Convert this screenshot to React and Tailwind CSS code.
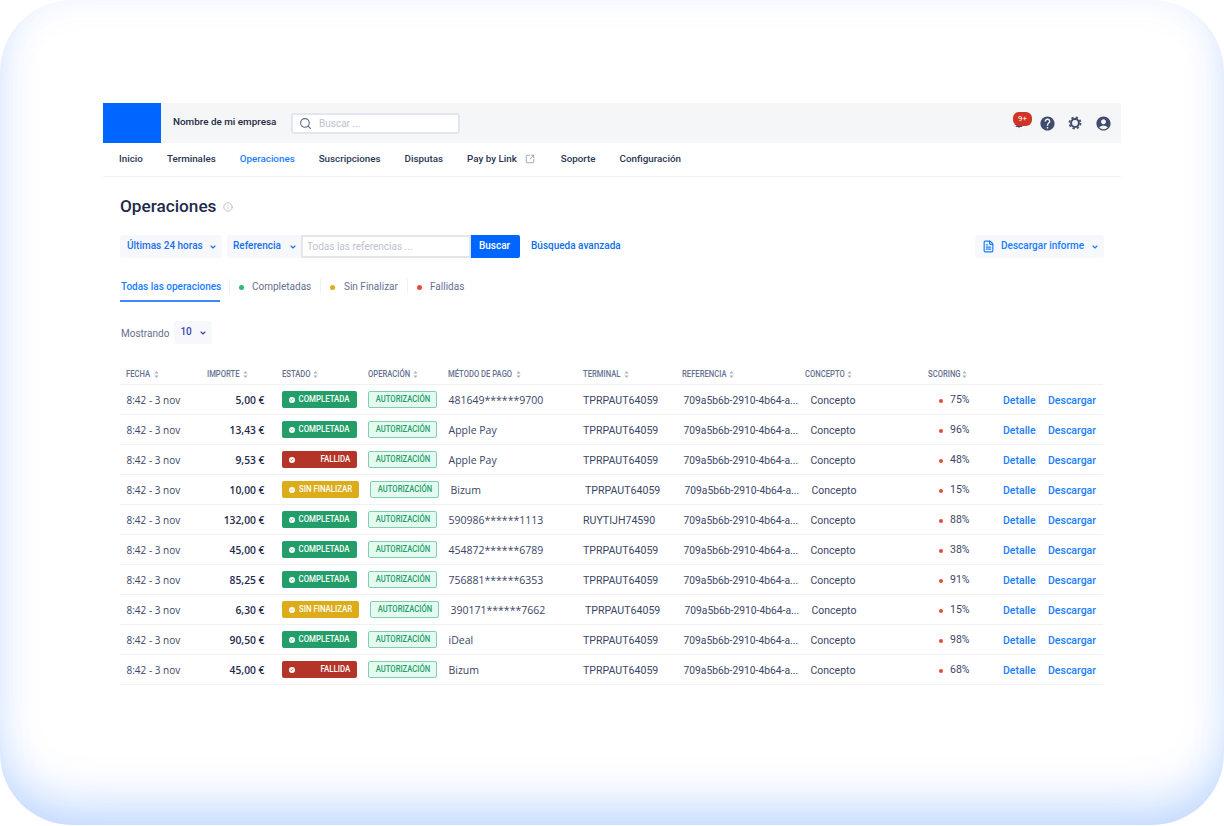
import React from 'react'
import { Search, SquareArrowOutUpRight, Info, ChevronDown, FileText, Check } from 'lucide-react'
import { MdHelp, MdAccountCircle, MdNotifications } from 'react-icons/md'

const rows = [
  { amount: '5,00 €', status: 'ok', method: '481649******9700', terminal: 'TPRPAUT64059', score: '75%' },
  { amount: '13,43 €', status: 'ok', method: 'Apple Pay', terminal: 'TPRPAUT64059', score: '96%' },
  { amount: '9,53 €', status: 'fail', method: 'Apple Pay', terminal: 'TPRPAUT64059', score: '48%' },
  { amount: '10,00 €', status: 'pending', method: 'Bizum', terminal: 'TPRPAUT64059', score: '15%' },
  { amount: '132,00 €', status: 'ok', method: '590986******1113', terminal: 'RUYTIJH74590', score: '88%' },
  { amount: '45,00 €', status: 'ok', method: '454872******6789', terminal: 'TPRPAUT64059', score: '38%' },
  { amount: '85,25 €', status: 'ok', method: '756881******6353', terminal: 'TPRPAUT64059', score: '91%' },
  { amount: '6,30 €', status: 'pending', method: '390171******7662', terminal: 'TPRPAUT64059', score: '15%' },
  { amount: '90,50 €', status: 'ok', method: 'iDeal', terminal: 'TPRPAUT64059', score: '98%' },
  { amount: '45,00 €', status: 'fail', method: 'Bizum', terminal: 'TPRPAUT64059', score: '68%' },
]

function SortIcon() {
  return (
    <svg width="5" height="7" viewBox="0 0 5 7" className="ml-[3px] shrink-0" fill="#a9b2c6">
      <path d="M2.5 0 L4.6 2.6 H0.4 Z" />
      <path d="M2.5 7 L4.6 4.4 H0.4 Z" />
    </svg>
  )
}

function GearIcon() {
  return (
    <svg width="14" height="14" viewBox="0 0 14 14" fill="none" stroke="#3f4c6b" className="ml-[12.5px]">
      <circle cx="7" cy="7" r="3.9" strokeWidth="2" />
      <circle cx="7" cy="7" r="5.6" strokeWidth="1.7" strokeDasharray="2.3 2.1" />
    </svg>
  )
}

function HeaderCell({ width, labelWidth, label }) {
  return (
    <div className={`${width} flex items-center font-medium text-[#66708f] uppercase`}>
      <span className={`${labelWidth} shrink-0 whitespace-nowrap`}>
        <span className="block origin-left scale-x-[0.85] text-[9px]">{label}</span>
      </span>
      <SortIcon />
    </div>
  )
}

function BadgeText({ children, width }) {
  return (
    <span className={`${width} flex justify-end whitespace-nowrap`}>
      <span className="block shrink-0 origin-right scale-x-[0.87] text-[9px]">{children}</span>
    </span>
  )
}

function StatusBadge({ status }) {
  if (status === 'fail') {
    return (
      <div className="w-[75px] h-[17px] bg-[#b43527] rounded-[2px] flex items-center justify-between pl-[7px] pr-[7px] text-white font-medium">
        <span className="w-[6px] h-[6px] bg-white rounded-full flex items-center justify-center"><Check size={4} color="#b43527" strokeWidth={4} /></span>
        <BadgeText width="w-[40px]">FALLIDA</BadgeText>
      </div>
    )
  }
  if (status === 'pending') {
    return (
      <div className="w-[77px] h-[17px] bg-[#dcac1b] rounded-[2px] flex items-center justify-between pl-[7px] pr-[7px] text-white font-medium">
        <span className="w-[6px] h-[6px] bg-white rounded-full flex items-center justify-center"><Check size={4} color="#dcac1b" strokeWidth={4} /></span>
        <BadgeText width="w-[53px]">SIN FINALIZAR</BadgeText>
      </div>
    )
  }
  return (
    <div className="w-[75px] h-[17px] bg-[#239e6a] rounded-[2px] flex items-center justify-between pl-[7px] pr-[7px] text-white font-medium">
      <span className="w-[6px] h-[6px] bg-white rounded-full flex items-center justify-center"><Check size={4} color="#239e6a" strokeWidth={4} /></span>
      <BadgeText width="w-[51px]">COMPLETADA</BadgeText>
    </div>
  )
}

function Row({ row }) {
  const wide = row.status === 'pending'
  return (
    <div className="h-[30px] pt-[2px] flex items-center border-b border-[#f0f1f4] text-[10.5px] text-[#3c4666] [font-family:'Open_Sans',sans-serif]">
      <div className="w-[83px] pl-[6.5px] text-[10px]">8:42 - 3 nov</div>
      <div className="w-[62px] pr-[0.5px] text-right text-[#1f2a4d] text-[10.3px] font-semibold">{row.amount}</div>
      <div className={`${wide ? 'w-[105px]' : 'w-[103px]'} pl-[17px] -mt-[2px] [font-family:Roboto,sans-serif]`}>
        <StatusBadge status={row.status} />
      </div>
      <div className="w-[80px] -mt-[2px] [font-family:Roboto,sans-serif]">
        <div className="w-[69px] h-[17px] bg-[#e4faf0] border border-[#7fcfae] rounded-[2px] flex items-center justify-center font-medium text-[#239e6a]">
          <span className="block shrink-0 origin-center scale-x-[0.85] text-[9px]">AUTORIZACIÓN</span>
        </div>
      </div>
      <div className="w-[135px] pl-[0.5px]">{row.method}</div>
      <div className={`${wide ? 'w-[99px]' : 'w-[100px]'} text-[10.6px] [font-family:Roboto,sans-serif]`}>{row.terminal}</div>
      <div className="w-[127px] pl-[0.5px] text-[10.3px] [font-family:Roboto,sans-serif]">709a5b6b-2910-4b64-a...</div>
      <div className={`${wide ? 'w-[128px]' : 'w-[129px]'} pl-[0.5px] [font-family:Roboto,sans-serif]`}>Concepto</div>
      <div className="w-[64px] flex items-center [font-family:Roboto,sans-serif]">
        <span className="w-[4px] h-[4px] rounded-full bg-[#e84a36] mr-[7px]"></span>
        <span className="-mt-[2px]">{row.score}</span>
      </div>
      <div className="flex items-center text-[#1a7dff] font-medium text-[10.5px] [font-family:Roboto,sans-serif]">
        <span className="w-[33px]">Detalle</span>
        <span className="w-px h-[12px] bg-[#eef0f4] mr-[11px]"></span>
        <span>Descargar</span>
      </div>
    </div>
  )
}

export default function App() {
  return (
    <div className="w-[1224px] h-[826px] bg-white overflow-hidden [font-family:Roboto,sans-serif]">
      <div className="w-full h-[825px] rounded-[72px] bg-white shadow-[inset_0_-30px_48px_-10px_rgba(0,102,255,0.22),inset_0_0_40px_rgba(0,102,255,0.06)] px-[103px] pt-[103px]">
        {/* Barra superior */}
        <div className="h-[40px] bg-[#f5f6f8] flex items-center">
          <div className="w-[58px] h-[40px] bg-[#0066ff]"></div>
          <div className="ml-[12px] w-[118px] pb-[2px] text-[9.9px] font-medium text-[#1f2a44] whitespace-nowrap">Nombre de mi empresa</div>
          <div className="w-[169px] h-[21px] bg-white border-2 border-[#e3e6ec] rounded-[3px] flex items-center pl-[6px]">
            <Search size={13} color="#5d6785" />
            <span className="ml-[7px] text-[10px] text-[#bcc2d0]">Buscar ...</span>
          </div>
          <div className="ml-auto flex items-center text-[#3f4c6b] pr-[8.8px]">
            <div className="relative w-[10px] h-[10px] mt-[2px]">
              <MdNotifications size={10} />
              <span className="absolute left-[-1px] top-[-7px] w-[19px] h-[14px] rounded-[6px] bg-[#cf3427] text-white text-[8px] flex items-center justify-center">9+</span>
            </div>
            <MdHelp size={17} className="ml-[14.5px]" />
            <GearIcon />
            <MdAccountCircle size={17} className="ml-[13.2px]" />
          </div>
        </div>

        {/* Navegación */}
        <div className="h-[34px] pb-px border-b border-[#f0f1f4] flex items-center pl-[16px] gap-[24px] text-[9.8px] font-medium text-[#2a3553]">
          <span>Inicio</span>
          <span>Terminales</span>
          <span className="text-[#1a7dff]">Operaciones</span>
          <span>Suscripciones</span>
          <span>Disputas</span>
          <span className="flex items-center pr-[2px]">
            Pay by Link
            <SquareArrowOutUpRight size={10} color="#8d95aa" className="ml-[8px]" />
          </span>
          <span>Soporte</span>
          <span>Configuración</span>
        </div>

        <div className="pl-[17px] pr-[17px]">
          {/* Título */}
          <div className="mt-[18px] h-[22px] pt-[2px] flex items-center">
            <h1 className="text-[17.2px] font-medium text-[#1e2a4a]">Operaciones</h1>
            <Info size={10} color="#a9b4d0" className="ml-[7px]" />
          </div>

          {/* Filtros */}
          <div className="mt-[18px] h-[23px] flex items-center text-[10px] font-medium text-[#1a6fe8]">
            <div className="w-[102px] h-[23px] pb-[2px] bg-[#f6f8fb] rounded-[3px] flex items-center justify-between pl-[7px] pr-[5px]">
              Últimas 24 horas
              <ChevronDown size={8} strokeWidth={3.5} className="mt-[3px]" />
            </div>
            <div className="ml-[5px] w-[74px] h-[23px] pb-[2px] bg-[#f6f8fb] rounded-l-[3px] flex items-center justify-between pl-[6px] pr-[4px]">
              Referencia
              <ChevronDown size={8} strokeWidth={3.5} className="mt-[3px]" />
            </div>
            <div className="w-[170px] h-[23px] pb-px bg-white border-2 border-[#e3e6ec] flex items-center pl-[4px] font-normal text-[#bcc2d0]">
              Todas las referencias ...
            </div>
            <div className="w-[49px] h-[23px] pb-[2px] pr-[2px] bg-[#0066ff] rounded-r-[2px] text-white flex items-center justify-center">Buscar</div>
            <span className="ml-[11px] pb-[2px] text-[#0f6fe8]">Búsqueda avanzada</span>
            <div className="ml-auto w-[129px] h-[23px] bg-[#f6f8fb] rounded-[3px] flex items-center pl-[7px] pr-[5px] text-[#1a7dff]">
              <FileText size={13} strokeWidth={2.2} />
              <span className="ml-[6px] pb-[2px]">Descargar informe</span>
              <ChevronDown size={8} strokeWidth={3.5} className="ml-auto" />
            </div>
          </div>

          {/* Pestañas */}
          <div className="mt-[18px] h-[26px] flex items-start text-[10px] text-[#66708f]">
            <div className="w-[100px] h-[26px] border-b-2 border-[#3b8bff] pl-px pt-[3px] text-[#1a7dff] font-medium whitespace-nowrap">Todas las operaciones</div>
            <div className="ml-[9px] h-[14px] mt-[3px] border-l border-[#eef0f4] pl-[9px] w-[91px] flex items-center">
              <span className="w-[5px] h-[5px] rounded-full bg-[#2dbb78] mr-[8px] mt-[3px]"></span>Completadas
            </div>
            <div className="h-[14px] mt-[3px] border-l border-[#eef0f4] pl-[9px] w-[87px] flex items-center">
              <span className="w-[5px] h-[5px] rounded-full bg-[#e5ac10] mr-[9px] mt-[3px]"></span>Sin Finalizar
            </div>
            <div className="h-[14px] mt-[3px] border-l border-[#eef0f4] pl-[9px] flex items-center">
              <span className="w-[5px] h-[5px] rounded-full bg-[#e84a36] mr-[8px] mt-[3px]"></span>Fallidas
            </div>
          </div>

          {/* Mostrando */}
          <div className="mt-[19px] h-[23px] flex items-center">
            <span className="text-[10px] text-[#66708f] pl-px pt-[1px]">Mostrando</span>
            <div className="ml-[5px] w-[38px] h-[23px] bg-[#f6f8fb] rounded-[3px] flex items-center justify-between pl-[6px] pr-[5px] text-[10px] font-medium text-[#3a46a8]">
              <span className="pb-[2px]">10</span>
              <ChevronDown size={8} strokeWidth={3.5} />
            </div>
          </div>

          {/* Tabla */}
          <div className="mt-[20px] w-[983px]">
            <div className="h-[21px] border-b border-[#f0f1f4] flex items-center pt-px pl-[6px]">
              <HeaderCell width="w-[81px]" labelWidth="w-[25px]" label="Fecha" />
              <HeaderCell width="w-[75px]" labelWidth="w-[33px]" label="Importe" />
              <HeaderCell width="w-[86px]" labelWidth="w-[28px]" label="Estado" />
              <HeaderCell width="w-[80px]" labelWidth="w-[42px]" label="Operación" />
              <HeaderCell width="w-[135px]" labelWidth="w-[65px]" label="Método de pago" />
              <HeaderCell width="w-[99px]" labelWidth="w-[38px]" label="Terminal" />
              <HeaderCell width="w-[123px]" labelWidth="w-[44px]" label="Referencia" />
              <HeaderCell width="w-[123px]" labelWidth="w-[39px]" label="Concepto" />
              <HeaderCell width="w-[60px]" labelWidth="w-[31px]" label="Scoring" />
            </div>
            {rows.map((row, i) => (
              <Row key={i} row={row} />
            ))}
          </div>
        </div>
      </div>
    </div>
  )
}
